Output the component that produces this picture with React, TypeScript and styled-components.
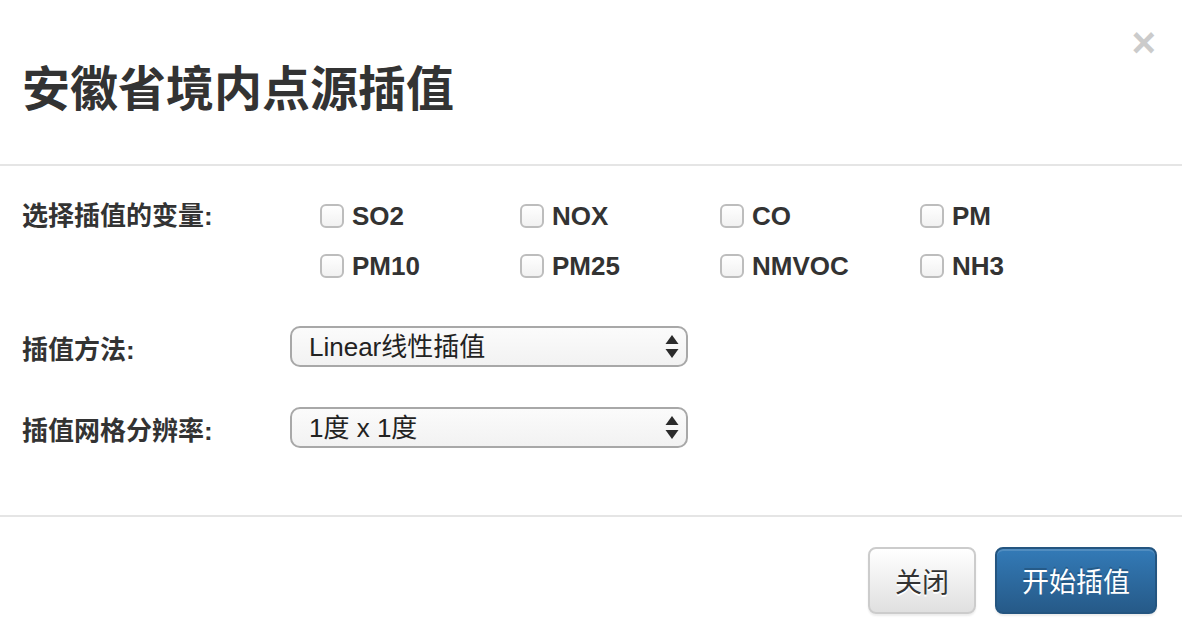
import { createGlobalStyle } from "styled-components";
import styled from "styled-components";

const GlobalStyle = createGlobalStyle`
  html, body {
    margin: 0;
    padding: 0;
    background: #fff;
  }
  body {
    font-family: "Liberation Sans", "Noto Sans CJK SC", sans-serif;
    color: #333;
  }
`;

const Modal = styled.div`
  width: 1182px;
  height: 636px;
  display: flex;
  flex-direction: column;
  background: #fff;
  overflow: hidden;
`;

const Header = styled.div`
  height: 166px;
  box-sizing: border-box;
  padding: 22px 26px 0 22px;
  border-bottom: 2px solid #e5e5e5;
  display: flex;
  flex-direction: column;
`;

const CloseButton = styled.button`
  align-self: flex-end;
  border: 0;
  background: none;
  padding: 0;
  font-family: "Liberation Sans", sans-serif;
  font-size: 42px;
  font-weight: bold;
  line-height: 1;
  color: #000;
  opacity: 0.2;
  cursor: pointer;
`;

const Title = styled.h4`
  margin: 0;
  font-size: 48px;
  font-weight: bold;
  line-height: 1.1;
  color: #333;
`;

const Body = styled.div`
  padding: 25px 22px 0 22px;
  height: 351px;
  box-sizing: border-box;
  border-bottom: 2px solid #e5e5e5;
  display: flex;
  flex-direction: column;
`;

const Row = styled.div<{ $top?: number }>`
  display: flex;
  align-items: flex-start;
  margin-top: ${(p) => p.$top ?? 0}px;
`;

const Label = styled.label<{ $lineHeight?: number }>`
  width: 268px;
  flex-shrink: 0;
  font-size: 26px;
  font-weight: bold;
  line-height: ${(p) => p.$lineHeight ?? 50}px;
  padding-top: ${(p) => (p.$lineHeight ? 4 : 0)}px;
`;

const CheckGrid = styled.div`
  margin-left: 30px;
  display: grid;
  grid-template-columns: repeat(4, 200px);
  grid-auto-rows: 50px;
`;

const CheckItem = styled.label`
  display: flex;
  align-items: center;
  gap: 8px;
  font-size: 26px;
  font-weight: bold;
  color: #333;
`;

const Box = styled.input`
  appearance: none;
  margin: 0;
  width: 24px;
  height: 24px;
  box-sizing: border-box;
  border: 2px solid #bdbdbd;
  border-radius: 6px;
  background: linear-gradient(#ffffff, #f1f1f1);
`;

const SelectWrap = styled.div`
  position: relative;
  width: 398px;
  height: 41px;
`;

const Select = styled.select`
  appearance: none;
  width: 100%;
  height: 100%;
  box-sizing: border-box;
  border: 2px solid #a8a8a8;
  border-radius: 10px;
  background: linear-gradient(#fbfbfb, #f2f2f2);
  padding: 0 40px 0 17px;
  font-family: "Liberation Sans", "Noto Sans CJK SC", sans-serif;
  font-size: 26px;
  color: #222;
  outline: none;
`;

const Arrows = styled.svg`
  position: absolute;
  right: 9px;
  top: 9px;
  pointer-events: none;
`;

const Footer = styled.div`
  flex: 1;
  display: flex;
  justify-content: flex-end;
  align-items: flex-start;
  gap: 19px;
  padding: 30px 25px 0 0;
`;

const Btn = styled.button<{ $primary?: boolean }>`
  height: 67px;
  padding: 0 25px;
  box-sizing: border-box;
  border-radius: 8px;
  font-family: "Liberation Sans", "Noto Sans CJK SC", sans-serif;
  font-size: 27px;
  cursor: pointer;
  border: 2px solid ${(p) => (p.$primary ? "#245580" : "#cccccc")};
  color: ${(p) => (p.$primary ? "#fff" : "#333")};
  background: ${(p) =>
    p.$primary
      ? "linear-gradient(#337ab7, #265a88)"
      : "linear-gradient(#ffffff, #e0e0e0)"};
  text-shadow: ${(p) =>
    p.$primary ? "0 -2px 0 rgba(0,0,0,0.2)" : "0 2px 0 #fff"};
  box-shadow: inset 0 2px 0 rgba(255, 255, 255, 0.15),
    0 2px 2px rgba(0, 0, 0, 0.075);
`;

const pollutants = ["SO2", "NOX", "CO", "PM", "PM10", "PM25", "NMVOC", "NH3"];

function UpDown() {
  return (
    <Arrows width="14" height="23" viewBox="0 0 14 23">
      <path d="M7 0 L13.5 9 L0.5 9 Z" fill="#2b2b2b" />
      <path d="M7 23 L13.5 14 L0.5 14 Z" fill="#2b2b2b" />
    </Arrows>
  );
}

export default function App() {
  return (
    <>
      <GlobalStyle />
      <Modal>
        <Header>
          <CloseButton aria-label="Close">×</CloseButton>
          <Title>安徽省境内点源插值</Title>
        </Header>
        <Body>
          <Row>
            <Label>选择插值的变量:</Label>
            <CheckGrid>
              {pollutants.map((p) => (
                <CheckItem key={p}>
                  <Box type="checkbox" />
                  {p}
                </CheckItem>
              ))}
            </CheckGrid>
          </Row>
          <Row $top={35}>
            <Label $lineHeight={41}>插值方法:</Label>
            <SelectWrap>
              <Select defaultValue="linear">
                <option value="linear">Linear线性插值</option>
                <option value="nearest">Nearest最近邻插值</option>
              </Select>
              <UpDown />
            </SelectWrap>
          </Row>
          <Row $top={36}>
            <Label $lineHeight={41}>插值网格分辨率:</Label>
            <SelectWrap>
              <Select defaultValue="1">
                <option value="1">1度 x 1度</option>
                <option value="0.5">0.5度 x 0.5度</option>
              </Select>
              <UpDown />
            </SelectWrap>
          </Row>
        </Body>
        <Footer>
          <Btn>关闭</Btn>
          <Btn $primary>开始插值</Btn>
        </Footer>
      </Modal>
    </>
  );
}
